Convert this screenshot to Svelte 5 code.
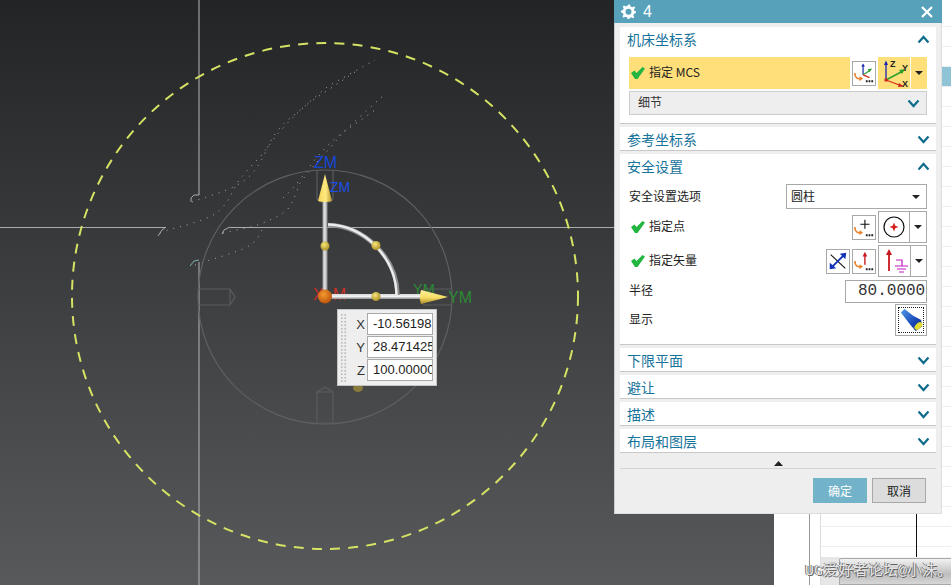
<script lang="ts">
    // dotted toolpath traces in the graphics window
    const traces = [
        "M192 202 C205 197 225 192 237 185 C250 178 258 170 270 142 C280 125 290 118 297 113 C310 102 320 92 330 85 L375 60",
        "M160 233 C172 228 182 227 193 223 C205 219 214 216 220 210 C230 200 232 192 237 183 C245 172 252 165 260 157 C270 145 275 136 283 128 C292 118 300 110 310 102 L355 72",
        "M223 233 C236 230 250 228 263 223 C272 219 280 216 287 210 C294 202 296 192 300 183 C310 170 320 158 330 148 C340 136 345 130 353 123 L385 94",
        "M195 265 C215 258 232 254 247 247 C255 243 260 236 263 227",
        "M283 198 C292 190 300 180 307 170 C318 155 330 142 342 133 L378 108",
    ];

    const sections_after = ["下限平面", "避让", "描述", "布局和图层"];
</script>

{#snippet chevron(up: boolean)}
    <svg class="chev" width="13" height="9" viewBox="0 0 13 9">
        <path d={up ? "M1.5 7.5 L6.5 2 L11.5 7.5" : "M1.5 1.5 L6.5 7 L11.5 1.5"} fill="none" stroke="#0f6d8b" stroke-width="2.2" />
    </svg>
{/snippet}

{#snippet check()}
    <svg class="check" width="14" height="12" viewBox="0 0 14 12">
        <path d="M0 6 L3.500 3.500 L5.500 6 L11.500 0 L14 1.500 L6.500 12 L4 12 Z" fill="#22b540" />
    </svg>
{/snippet}

{#snippet caret()}
    <svg width="8" height="4" viewBox="0 0 8 4"><path d="M0 0 H8 L4 4 Z" fill="#222" /></svg>
{/snippet}

{#snippet swirl()}
    <path d="M2 12 C2 17 5 19 9 18" fill="none" stroke="#e8822a" stroke-width="1.8" />
    <path d="M7 15.5 L11 18 L7 21 Z" fill="#e8822a" />
    <path d="M14 20 h2 v2 h-2 z M17 20 h2 v2 h-2 z M20 20 h2 v2 h-2 z" fill="#222" />
{/snippet}

<div class="app">
    <div class="viewport">
        <svg class="scene" width="774" height="585" viewBox="0 0 774 585">
            <!-- datum lines -->
            <path d="M199 0 V195 M199 262 V585" stroke="#b4b6b8" stroke-width="1" fill="none" />
            <path d="M0 227.5 H166 M230 227.5 H774" stroke="#a9abad" stroke-width="1" fill="none" />
            <path d="M199 195 L194 195 L191 198 L191 202 M166 227 L162 230 L158 236 M230 227 L224 230 L222 234" stroke="#aaa" fill="none" />
            <path d="M199 260 L194 261 L190 266" stroke="#7fb0b0" fill="none" />

            {#each traces as d}
                <path {d} fill="none" stroke="#a8aaab" stroke-width="1" stroke-dasharray="1 6" />
            {/each}

            <circle cx="325" cy="296" r="253" fill="none" stroke="#d5e264" stroke-width="2" stroke-dasharray="10 8.2" />
            <circle cx="325" cy="297" r="127" fill="none" stroke="#5e6061" stroke-width="1.2" />

            <!-- handle outlines -->
            <g fill="none" stroke="#5a5c5d" stroke-width="1.2">
                <path d="M199 289 H230 L235 297 L230 305 H199 M230 289 V305" />
                <path d="M317 171 V199 L320 202 H330 L333 199 V171" />
                <path d="M317 392 L325 387 L333 392 V423 H317 Z" />
                <path d="M317 392 H333" />
                <path d="M452 289 H424 L418 297 L424 305 H452" />
            </g>

            <ellipse cx="358" cy="388" rx="5" ry="4" fill="#8a7a3c" />

            <defs>
                <linearGradient id="tube-v" x1="0" x2="1" y1="0" y2="0">
                    <stop offset="0" stop-color="#9a9b9c" />
                    <stop offset="0.45" stop-color="#e6e6e6" />
                    <stop offset="1" stop-color="#8c8d8e" />
                </linearGradient>
                <linearGradient id="tube-h" x1="0" x2="0" y1="0" y2="1">
                    <stop offset="0" stop-color="#d8d8d8" />
                    <stop offset="0.5" stop-color="#f2f2f2" />
                    <stop offset="1" stop-color="#8c8d8e" />
                </linearGradient>
                <linearGradient id="cone-z" x1="0" x2="1" y1="0" y2="0">
                    <stop offset="0" stop-color="#f3d65c" />
                    <stop offset="0.55" stop-color="#ffe97f" />
                    <stop offset="1" stop-color="#b8972c" />
                </linearGradient>
                <linearGradient id="cone-y" x1="0" x2="0" y1="0" y2="1">
                    <stop offset="0" stop-color="#fff2a0" />
                    <stop offset="0.55" stop-color="#f6dc62" />
                    <stop offset="1" stop-color="#a98a28" />
                </linearGradient>
                <radialGradient id="ball" cx="0.4" cy="0.35" r="0.7">
                    <stop offset="0" stop-color="#f7e67a" />
                    <stop offset="1" stop-color="#a88c24" />
                </radialGradient>
                <radialGradient id="origin" cx="0.4" cy="0.35" r="0.7">
                    <stop offset="0" stop-color="#f59a2c" />
                    <stop offset="1" stop-color="#b8500c" />
                </radialGradient>
            </defs>

            <text class="lbl" x="314" y="168" fill="#1447d8" font-size="16">ZM</text>
            <text class="lbl" x="330" y="192" fill="#1a4fe8" font-size="14">ZM</text>
            <text class="lbl" x="313" y="300" fill="#c83028" font-size="16" textLength="33">XM</text>
            <text class="lbl" x="413" y="294" fill="#2c8a34" font-size="14.5">YM</text>
            <text class="lbl" x="448" y="303" fill="#2c8a34" font-size="16">YM</text>

            <rect x="322.5" y="200" width="5" height="96" fill="url(#tube-v)" />
            <rect x="328" y="294" width="94" height="5" fill="url(#tube-h)" />
            <path d="M328 225 C365 226 397 258 397.500 295" fill="none" stroke="#8e8f90" stroke-width="4.5" />
            <path d="M328 224.500 C365 225.500 396 258 396.500 295" fill="none" stroke="#ececec" stroke-width="2.5" />

            <path d="M325 174 L332 201 Q325 203 318 201 Z" fill="url(#cone-z)" />
            <path d="M448 297 L421 290 Q419 297 421 304 Z" fill="url(#cone-y)" />

            <circle cx="325" cy="246" r="4.500" fill="url(#ball)" />
            <circle cx="376" cy="245.500" r="4.500" fill="url(#ball)" />
            <circle cx="376" cy="296.500" r="4.500" fill="url(#ball)" />
            <circle cx="325" cy="296.500" r="7" fill="url(#origin)" />
        </svg>

        <div class="coords">
            <div class="grip"></div>
            <div class="coord-rows">
                <label>X<span class="coord-val">-10.56198</span></label>
                <label>Y<span class="coord-val">28.471425</span></label>
                <label>Z<span class="coord-val">100.00000</span></label>
            </div>
        </div>
    </div>

    <div class="sheet">
        <div class="gutter"></div>
        <div class="gutter narrow"></div>
        <div class="grid">
            <div class="cells">
                <div class="selected"></div>
                <div class="rule"></div>
            </div>
            <div class="hscroll">
                <span class="hscroll-arrow"></span>
                <span class="hscroll-thumb"></span>
            </div>
        </div>
    </div>

    <div class="watermark">UG爱好者论坛@小沫。</div>

    <div class="dialog">
        <div class="titlebar">
            <svg width="15" height="15" viewBox="0 0 15 15">
                <path d="M7.500 0.500 L9 0.500 L9.500 2.500 L11.500 3.300 L13.200 2.200 L14.300 3.800 L12.900 5.300 L13.500 7 L15 7.500 L15 9 L13 9.800 L12.300 11.500 L13.300 13 L12 14.300 L10.300 13.200 L8.800 14 L8.300 15 L6.500 15 L6 13.300 L4.300 12.700 L2.700 13.700 L1.400 12.300 L2.500 10.700 L1.800 9 L0 8.500 L0 6.700 L2 6 L2.700 4.300 L1.700 2.700 L3 1.400 L4.700 2.400 L6.300 1.800 Z" fill="#fff" />
                <circle cx="7.500" cy="7.700" r="3" fill="#57a1bb" />
            </svg>
            <span class="title-num">4</span>
            <svg class="close" width="12" height="12" viewBox="0 0 12 12">
                <path d="M1 1 L11 11 M11 1 L1 11" stroke="#fff" stroke-width="2.200" />
            </svg>
        </div>

        <div class="body">
            <section>
                <header><h2>机床坐标系</h2>{@render chevron(true)}</header>
                <div class="content">
                    <div class="row">
                        <div class="pick">
                            {@render check()}
                            <span class="txt">指定 MCS</span>
                        </div>
                        <button class="tool small">
                            <svg width="24" height="24" viewBox="0 0 24 24">
                                <path d="M11 14 V4" stroke="#1622b0" stroke-width="1.300" />
                                <path d="M9 5 L11 1.500 L13 5 Z" fill="#1622b0" />
                                <path d="M11 14 L19 9" stroke="#2ca02c" stroke-width="1.300" />
                                <path d="M16 8 L21 7 L18 11 Z" fill="#2ca02c" />
                                <path d="M11 14 L18 17" stroke="#d0281c" stroke-width="1.300" />
                                {@render swirl()}
                            </svg>
                        </button>
                        <div class="combo yellow">
                            <span class="combo-main">
                                <svg width="32" height="32" viewBox="0 0 32 32">
                                    <path d="M8 23 V7" stroke="#1622b0" stroke-width="1.300" />
                                    <path d="M6 8 L8 3.500 L10 8 Z" fill="#1622b0" />
                                    <path d="M8 23 L25 14" stroke="#2ca02c" stroke-width="1.500" />
                                    <path d="M21 13 L27 12 L24 17 Z" fill="#2ca02c" />
                                    <path d="M8 23 L24 29" stroke="#d0281c" stroke-width="1.300" />
                                    <path d="M21 26 L26 29.500 L20 30 Z" fill="#d0281c" />
                                    <rect x="6.500" y="21.500" width="3" height="3" fill="#d0281c" />
                                    <text class="axis" x="12" y="10">Z</text>
                                    <text class="axis" x="24" y="14">Y</text>
                                    <text class="axis" x="24" y="30">X</text>
                                </svg>
                            </span>
                            <span class="combo-drop">{@render caret()}</span>
                        </div>
                    </div>
                    <div class="details"><span class="txt">细节</span>{@render chevron(false)}</div>
                </div>
            </section>

            <section>
                <header><h2>参考坐标系</h2>{@render chevron(false)}</header>
            </section>

            <section>
                <header><h2>安全设置</h2>{@render chevron(true)}</header>
                <div class="content">
                    <div class="row between h25">
                        <span class="field txt">安全设置选项</span>
                        <div class="select"><span class="txt">圆柱</span>{@render caret()}</div>
                    </div>
                    <div class="row between">
                        <span class="field">{@render check()}<span class="txt">指定点</span></span>
                        <div class="tools">
                            <button class="tool small">
                                <svg width="24" height="24" viewBox="0 0 24 24">
                                    <path d="M13 4 V14 M8 9 H18" stroke="#111" stroke-width="1.200" />
                                    {@render swirl()}
                                </svg>
                            </button>
                            <div class="combo">
                                <span class="combo-main">
                                    <svg width="24" height="24" viewBox="0 0 24 24">
                                        <circle cx="12" cy="12" r="10" fill="none" stroke="#111" stroke-width="1.200" />
                                        <path d="M12 7.500 L13.300 10.700 L16.500 12 L13.300 13.300 L12 16.500 L10.700 13.300 L7.500 12 L10.700 10.700 Z" fill="#d6201c" />
                                    </svg>
                                </span>
                                <span class="combo-drop">{@render caret()}</span>
                            </div>
                        </div>
                    </div>
                    <div class="row between">
                        <span class="field">{@render check()}<span class="txt">指定矢量</span></span>
                        <div class="tools">
                            <button class="tool small">
                                <svg width="24" height="24" viewBox="0 0 24 24">
                                    <path d="M4 5 L20 20" stroke="#111" stroke-width="1.200" />
                                    <path d="M5 19 L19 5" stroke="#1230b8" stroke-width="2" />
                                    <path d="M14 4 L21 3 L20 10 Z M3 14 L3 21 L10 20 Z" fill="#1230b8" />
                                </svg>
                            </button>
                            <button class="tool small">
                                <svg width="24" height="24" viewBox="0 0 24 24">
                                    <path d="M13 16 V6" stroke="#c8181c" stroke-width="1.500" />
                                    <path d="M10.500 7 L13 2 L15.500 7 Z" fill="#c8181c" />
                                    {@render swirl()}
                                </svg>
                            </button>
                            <div class="combo">
                                <span class="combo-main">
                                    <svg width="31" height="32" viewBox="0 0 31 32">
                                        <path d="M10 26 V8" stroke="#c8181c" stroke-width="1.800" />
                                        <path d="M7 10 L10 4 L13 10 Z" fill="#c8181c" />
                                        <path d="M17 15 H23 V21 M16 21 H29 M18 24 H27 M20 27 H25" fill="none" stroke="#c01ac0" stroke-width="1.200" />
                                    </svg>
                                </span>
                                <span class="combo-drop">{@render caret()}</span>
                            </div>
                        </div>
                    </div>
                    <div class="row between h24">
                        <span class="field txt">半径</span>
                        <div class="num"><span>80.00000</span></div>
                    </div>
                    <div class="row between last">
                        <span class="field txt">显示</span>
                        <button class="tool torch">
                            <span class="focus">
                                <svg width="24" height="24" viewBox="0 0 26 26">
                                    <defs>
                                        <linearGradient id="torch" x1="0" x2="1" y1="0" y2="1">
                                            <stop offset="0" stop-color="#4f9be8" />
                                            <stop offset="0.6" stop-color="#1a48b8" />
                                            <stop offset="1" stop-color="#0c2470" />
                                        </linearGradient>
                                    </defs>
                                    <path d="M2 5 L6 1 L15 8 L24 13 L25 20 L18 25 L12 18 Z" fill="url(#torch)" />
                                    <ellipse cx="21" cy="19.500" rx="5" ry="3" transform="rotate(-42 21 19.500)" fill="#e4dc30" />
                                </svg>
                            </span>
                        </button>
                    </div>
                </div>
            </section>

            {#each sections_after as name}
                <section>
                    <header><h2>{name}</h2>{@render chevron(false)}</header>
                </section>
            {/each}

            <div class="collapse">
                <svg width="9" height="5" viewBox="0 0 9 5"><path d="M0 5 L4.500 0 L9 5 Z" fill="#222" /></svg>
            </div>

            <footer>
                <button class="action ok">确定</button>
                <button class="action">取消</button>
            </footer>
        </div>
    </div>
</div>

<style>
    :global(body) {
        margin: 0;
        overflow: hidden;
    }
    .app {
        position: relative;
        width: 951px;
        height: 585px;
        display: flex;
        overflow: hidden;
        font-family: "Noto Sans CJK SC", "Liberation Sans", sans-serif;
    }

    /* graphics window */
    .viewport {
        position: relative;
        flex: 0 0 774px;
        height: 585px;
        background: linear-gradient(#232425, #58595b);
    }
    .scene {
        display: block;
    }
    .lbl {
        font-family: "Liberation Sans", sans-serif;
    }
    .coords {
        position: absolute;
        left: 337px;
        top: 309px;
        width: 98px;
        height: 75px;
        display: flex;
        background: #eee;
        border: 1px solid #c4c4c4;
    }
    .grip {
        width: 7px;
        margin: 3px 0 3px 2px;
        background-image: radial-gradient(circle, #bdbdbd 1.2px, transparent 1.3px);
        background-size: 3.500px 3.500px;
    }
    .coord-rows {
        flex: 1;
        display: flex;
        flex-direction: column;
        gap: 1px;
        padding: 3px 3px 0 0;
    }
    label {
        display: flex;
        justify-content: flex-end;
        align-items: center;
        gap: 2px;
        height: 22px;
        font: 13px "Liberation Sans", sans-serif;
        color: #333;
    }
    .coord-val {
        box-sizing: border-box;
        width: 66px;
        height: 22px;
        line-height: 20px;
        padding-left: 5px;
        background: #fff;
        border: 1px solid #aaa;
        overflow: hidden;
        white-space: nowrap;
        font-size: 13px;
        color: #222;
    }

    /* spreadsheet behind the dialog */
    .sheet {
        flex: 1;
        display: flex;
        background: #fff;
    }
    .gutter {
        box-sizing: border-box;
        width: 36px;
        border-right: 1px solid #999;
    }
    .gutter.narrow {
        width: 11px;
        border-right: 1px solid #ddd;
    }
    .grid {
        flex: 1;
        display: flex;
        flex-direction: column;
    }
    .cells {
        position: relative;
        flex: 1;
        background-color: #fff;
        background-image: repeating-linear-gradient(#fff 0 19px, #eee 19px 20px), repeating-linear-gradient(#fff, #fff);
        background-position: 0 7px;
    }
    .selected {
        position: absolute;
        right: 0;
        top: 67px;
        width: 9px;
        height: 19px;
        background: #8fc4d6;
    }
    .rule {
        position: absolute;
        left: 95px;
        top: 500px;
        width: 1px;
        height: 57px;
        background: #111;
    }
    .hscroll {
        flex: 0 0 28px;
        display: flex;
        background: #f4f4f4;
    }
    .hscroll-arrow {
        width: 18px;
        background: #e6e6e6;
    }
    .hscroll-thumb {
        flex: 1;
        margin-top: 1px;
        border: 1px solid #a8a8a8;
        border-right: 0;
        border-radius: 2px 0 0 0;
        background: linear-gradient(#f2f2f2, #bdbdbd 60%, #d6d6d6);
    }
    .watermark {
        position: absolute;
        left: 805px;
        top: 562px;
        white-space: nowrap;
        font-family: "Liberation Mono", "Noto Sans CJK SC", monospace;
        font-size: 15px;
        line-height: 20px;
        color: #e4e4e4;
        text-shadow: 1px 1px 0 #666, -1px 0 0 #777;
    }

    /* dialog */
    .dialog {
        position: absolute;
        left: 614px;
        top: 0;
        box-sizing: border-box;
        width: 328px;
        height: 514px;
        background: #eee;
        border: 1px solid #ddd;
        border-top: 0;
        border-left-color: #ccc;
    }
    .titlebar {
        display: flex;
        align-items: center;
        gap: 7px;
        height: 23px;
        margin: 0 -1px;
        padding: 0 9px 0 7px;
        background: #57a1bb;
        color: #fff;
    }
    .title-num {
        font: 16px "Liberation Sans", sans-serif;
    }
    .close {
        margin-left: auto;
    }
    .body {
        padding: 4px 5px 0 5px;
    }
    section {
        background: #fff;
        border-bottom: 1px solid #c8c8c8;
        margin-bottom: 3px;
    }
    header {
        display: flex;
        align-items: center;
        justify-content: space-between;
        height: 23px;
        padding: 2px 6px 0 7px;
        box-sizing: border-box;
    }
    h2 {
        margin: 0;
        font-size: 14px;
        font-weight: 400;
        line-height: 23px;
        color: #16739a;
    }
    .content {
        padding: 7px 9px 8px 9px;
        display: flex;
        flex-direction: column;
        gap: 2px;
    }
    .row {
        display: flex;
        align-items: center;
        gap: 2px;
        height: 32px;
        font-size: 12px;
        color: #222;
    }
    .row.between {
        justify-content: space-between;
    }
    .row.h25 {
        height: 25px;
    }
    .row.h24 {
        height: 24px;
    }
    .row.last {
        margin-top: -1px;
    }
    .txt {
        padding-bottom: 3px;
    }
    .pick {
        flex: 1;
        height: 32px;
        display: flex;
        align-items: center;
        gap: 4px;
        padding-left: 2px;
        background: #ffdf7a;
    }
    .check {
        flex: none;
    }
    .field {
        display: flex;
        align-items: center;
        gap: 4px;
    }
    .field .check {
        margin-left: 2px;
    }
    .tool {
        box-sizing: border-box;
        padding: 0;
        margin: 0;
        background: #fff;
        border: 1px solid #a8a8a8;
        display: flex;
        align-items: center;
        justify-content: center;
    }
    .tool.small {
        width: 24px;
        height: 25px;
    }
    .tool.torch {
        width: 32px;
        height: 32px;
    }
    .focus {
        width: 24px;
        height: 24px;
        display: block;
        border: 1px dotted #222;
        overflow: hidden;
    }
    .axis {
        font: 700 9px "Liberation Sans", sans-serif;
        fill: #222;
    }
    .combo {
        box-sizing: border-box;
        width: 49px;
        height: 32px;
        display: flex;
        border: 1px solid #a8a8a8;
        background: #fff;
    }
    .combo.yellow {
        background: #ffdf7a;
        border: 0;
    }
    .combo-main {
        flex: 1;
        display: flex;
        align-items: center;
        justify-content: center;
        border-right: 1px solid #a8a8a8;
    }
    .combo.yellow .combo-main {
        border-right-color: #fff;
    }
    .combo-drop {
        width: 16px;
        display: flex;
        align-items: center;
        justify-content: center;
    }
    .details {
        box-sizing: border-box;
        height: 24px;
        display: flex;
        align-items: center;
        justify-content: space-between;
        padding: 0 6px 0 8px;
        background: #eee;
        border: 1px solid #ccc;
        font-size: 12px;
        color: #333;
    }
    .tools {
        display: flex;
        align-items: center;
        gap: 2px;
    }
    .select {
        box-sizing: border-box;
        width: 141px;
        height: 25px;
        display: flex;
        align-items: center;
        justify-content: space-between;
        padding: 0 6px 0 4px;
        border: 1px solid #a8a8a8;
    }
    .select .txt {
        padding-bottom: 2px;
    }
    .num {
        box-sizing: border-box;
        width: 82px;
        height: 23px;
        padding-left: 12px;
        border: 1px solid #a8a8a8;
        overflow: hidden;
        white-space: nowrap;
        font: 16px/21px "Liberation Mono", monospace;
        color: #333;
    }
    .collapse {
        display: flex;
        justify-content: center;
        align-items: flex-start;
        height: 15px;
        padding-top: 7px;
        box-sizing: border-box;
        margin-top: -2px;
        border-bottom: 1px solid #d4d4d4;
    }
    footer {
        display: flex;
        justify-content: flex-end;
        gap: 5px;
        padding: 9px 10px 0 0;
    }
    .action {
        box-sizing: border-box;
        width: 54px;
        height: 25px;
        padding: 0;
        font-family: inherit;
        font-size: 12px;
        color: #222;
        background: #dcdcdc;
        border: 1px solid #a8a8a8;
    }
    .action.ok {
        color: #fff;
        background: #72b3c9;
        border: 0;
    }
</style>
